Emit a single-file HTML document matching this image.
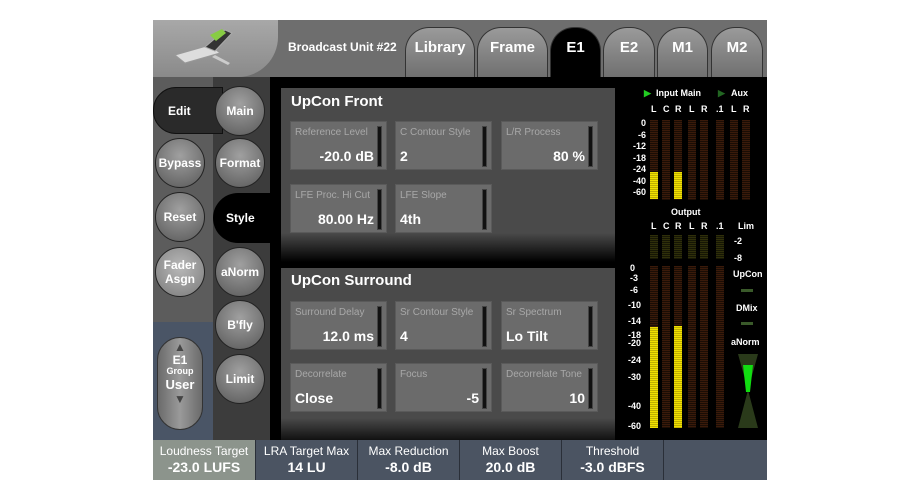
<!DOCTYPE html><html><head><style>
*{margin:0;padding:0;box-sizing:border-box}
body{width:920px;height:500px;background:#fff;font-family:"Liberation Sans",sans-serif;position:relative;overflow:hidden}
.a{position:absolute}
.b{font-weight:bold;color:#fff}
.tab{position:absolute;top:27px;height:52px;border-radius:24px 24px 0 0;background:linear-gradient(#9a9a9a,#6e6e6e);border:1px solid #333;border-bottom:none;color:#fff;font-weight:bold;font-size:15px;text-align:center;line-height:40px}
.circ{position:absolute;width:50px;height:50px;border-radius:50%;background:radial-gradient(circle at 50% 35%,#a0a0a0,#6a6a6a 75%,#4a4a4a);border:1px solid #222;color:#fff;font-weight:bold;font-size:12px;text-align:center;display:flex;align-items:center;justify-content:center;line-height:14px}
.panel{position:absolute;left:281px;width:334px;background:#4a4a4a}
.cell{position:absolute;width:97px;height:49px;background:#6b6b6b;border:1px solid #5a5a5a}
.cell .l{position:absolute;left:4px;top:5px;font-size:10px;color:#a8a8a8;white-space:nowrap}
.cell .v{position:absolute;top:26px;font-size:14px;font-weight:bold;color:#fff}
.sl{position:absolute;right:4px;top:4px;width:5px;height:41px;background:#111;border:1px solid #444}
.bot{position:absolute;top:440px;height:40px;background:#4b5462;color:#fff;text-align:center;font-size:12px;line-height:16px;padding-top:3px;border-right:1px solid #2a2f38}
.bot b{font-size:14px;display:block}
.m{position:absolute;color:#fff;font-weight:bold;font-size:9px}
.bar{position:absolute;width:8px;background:repeating-linear-gradient(#3a1a0a 0 1px,#1a0d05 1px 2px)}
.bar2{position:absolute;width:8px;background:repeating-linear-gradient(#2f2f0a 0 1px,#161605 1px 2px)}
.y{position:absolute;width:8px;background:repeating-linear-gradient(#f0e000 0 1px,#c0b000 1px 2px)}
</style></head><body>
<div class="a" style="left:153px;top:20px;width:614px;height:57px;background:#6e6e6e"></div>
<div class="a" style="left:153px;top:20px;width:125px;height:57px;background:linear-gradient(#a8a8a8,#8a8a8a);border-radius:0 0 40px 0"></div>
<svg class="a" style="left:170px;top:25px" width="80" height="45"><polygon points="5,30 40,20 50,28 15,38" fill="#ddd" stroke="#999"/><polygon points="35,22 55,5 62,8 45,26" fill="#333" stroke="#aaa"/><polygon points="40,10 52,4 56,8 46,16" fill="#8c4"/><polygon points="45,30 60,38 58,40 42,32" fill="#ccc"/></svg>
<div class="a b" style="left:288px;top:40px;font-size:12px">Broadcast Unit #22</div>
<div class="tab" style="left:405px;width:70px">Library</div>
<div class="tab" style="left:477px;width:71px">Frame</div>
<div class="tab" style="left:550px;width:51px;background:#000">E1</div>
<div class="tab" style="left:603px;width:52px">E2</div>
<div class="tab" style="left:657px;width:51px">M1</div>
<div class="tab" style="left:711px;width:52px">M2</div>
<div class="a" style="left:153px;top:77px;width:614px;height:363px;background:#000"></div>
<div class="a" style="left:153px;top:77px;width:60px;height:245px;background:#5c5c5c"></div>
<div class="a" style="left:153px;top:322px;width:60px;height:118px;background:#4a5566"></div>
<div class="a" style="left:213px;top:77px;width:57px;height:363px;background:#3c3c3c"></div>
<div class="a" style="left:153px;top:87px;width:70px;height:47px;background:#2a2a2a;border-radius:23px 0 0 23px;border:1px solid #111"></div>
<div class="a b" style="left:168px;top:104px;font-size:12px">Edit</div>
<div class="circ" style="left:215px;top:86px">Main</div>
<div class="circ" style="left:155px;top:138px">Bypass</div>
<div class="circ" style="left:215px;top:138px">Format</div>
<div class="circ" style="left:155px;top:192px">Reset</div>
<div class="a" style="left:213px;top:193px;width:57px;height:50px;background:#000;border-radius:25px 0 0 25px"></div>
<div class="a b" style="left:226px;top:211px;font-size:12px">Style</div>
<div class="circ" style="left:155px;top:247px;background:radial-gradient(circle at 50% 40%,#b8b8b8,#8a8a8a 75%,#666)">Fader<br>Asgn</div>
<div class="circ" style="left:215px;top:247px">aNorm</div>
<div class="circ" style="left:215px;top:300px">B'fly</div>
<div class="circ" style="left:215px;top:354px">Limit</div>
<div class="a" style="left:157px;top:337px;width:46px;height:93px;border-radius:23px;background:linear-gradient(90deg,#6a6a6a,#9a9a9a 50%,#6a6a6a);border:1px solid #333;color:#fff;font-weight:bold;text-align:center">
<div style="font-size:12px;color:#444;margin-top:2px">▲</div><div style="font-size:12px;line-height:12px">E1</div><div style="font-size:9px;line-height:11px">Group</div><div style="font-size:13px;line-height:15px">User</div><div style="font-size:12px;color:#444">▼</div></div>
<div class="panel" style="top:88px;height:174px;background:linear-gradient(#4a4a4a 0,#4a4a4a 145px,#000 174px)"></div>
<div class="a b" style="left:291px;top:93px;font-size:15px">UpCon Front</div>
<div class="cell" style="left:290px;top:121px"><span class="l">Reference Level</span><span class="v" style="right:12px">-20.0 dB</span><div class="sl"></div></div>
<div class="cell" style="left:395px;top:121px"><span class="l">C Contour Style</span><span class="v" style="left:4px">2</span><div class="sl"></div></div>
<div class="cell" style="left:501px;top:121px"><span class="l">L/R Process</span><span class="v" style="right:12px">80 %</span><div class="sl"></div></div>
<div class="cell" style="left:290px;top:184px"><span class="l">LFE Proc. Hi Cut</span><span class="v" style="right:12px">80.00 Hz</span><div class="sl"></div></div>
<div class="cell" style="left:395px;top:184px"><span class="l">LFE Slope</span><span class="v" style="left:4px">4th</span><div class="sl"></div></div>
<div class="panel" style="top:268px;height:172px;background:linear-gradient(#4a4a4a 0,#4a4a4a 150px,#111 172px)"></div>
<div class="a b" style="left:291px;top:272px;font-size:15px">UpCon Surround</div>
<div class="cell" style="left:290px;top:301px"><span class="l">Surround Delay</span><span class="v" style="right:12px">12.0 ms</span><div class="sl"></div></div>
<div class="cell" style="left:395px;top:301px"><span class="l">Sr Contour Style</span><span class="v" style="left:4px">4</span><div class="sl"></div></div>
<div class="cell" style="left:501px;top:301px"><span class="l">Sr Spectrum</span><span class="v" style="left:4px">Lo Tilt</span><div class="sl"></div></div>
<div class="cell" style="left:290px;top:363px"><span class="l">Decorrelate</span><span class="v" style="left:4px">Close</span><div class="sl"></div></div>
<div class="cell" style="left:395px;top:363px"><span class="l">Focus</span><span class="v" style="right:12px">-5</span><div class="sl"></div></div>
<div class="cell" style="left:501px;top:363px"><span class="l">Decorrelate Tone</span><span class="v" style="right:12px">10</span><div class="sl"></div></div>
<div class="m" style="left:644px;top:88px;color:#2c2">▶</div><div class="m" style="left:656px;top:88px">Input Main</div>
<div class="m" style="left:718px;top:88px;color:#262">▶</div><div class="m" style="left:731px;top:88px">Aux</div>
<div class="m" style="left:651px;top:104px">L</div><div class="m" style="left:663px;top:104px">C</div><div class="m" style="left:675px;top:104px">R</div><div class="m" style="left:689px;top:104px">L</div><div class="m" style="left:701px;top:104px">R</div><div class="m" style="left:716px;top:104px">.1</div><div class="m" style="left:731px;top:104px">L</div><div class="m" style="left:743px;top:104px">R</div>
<div class="m" style="left:630px;top:118px;line-height:11.5px;text-align:right;width:16px">0<br>-6<br>-12<br>-18<br>-24<br>-40<br>-60</div>
<div class="bar" style="left:650px;top:120px;height:80px"></div><div class="bar" style="left:662px;top:120px;height:80px"></div><div class="bar" style="left:674px;top:120px;height:80px"></div><div class="bar" style="left:688px;top:120px;height:80px"></div><div class="bar" style="left:700px;top:120px;height:80px"></div><div class="bar" style="left:716px;top:120px;height:80px"></div><div class="bar" style="left:730px;top:120px;height:80px"></div><div class="bar" style="left:742px;top:120px;height:80px"></div>
<div class="y" style="left:650px;top:172px;height:27px"></div><div class="y" style="left:674px;top:172px;height:27px"></div>
<div class="m" style="left:671px;top:207px">Output</div>
<div class="m" style="left:651px;top:221px">L</div><div class="m" style="left:663px;top:221px">C</div><div class="m" style="left:675px;top:221px">R</div><div class="m" style="left:689px;top:221px">L</div><div class="m" style="left:701px;top:221px">R</div><div class="m" style="left:716px;top:221px">.1</div><div class="m" style="left:738px;top:221px">Lim</div>
<div class="m" style="left:734px;top:236px">-2</div><div class="m" style="left:734px;top:253px">-8</div>
<div class="bar2" style="left:650px;top:235px;height:24px"></div><div class="bar2" style="left:662px;top:235px;height:24px"></div><div class="bar2" style="left:674px;top:235px;height:24px"></div><div class="bar2" style="left:688px;top:235px;height:24px"></div><div class="bar2" style="left:700px;top:235px;height:24px"></div><div class="bar2" style="left:716px;top:235px;height:24px"></div>
<div class="m" style="left:630px;top:263px">0</div><div class="m" style="left:630px;top:273px">-3</div><div class="m" style="left:630px;top:285px">-6</div><div class="m" style="left:628px;top:300px">-10</div><div class="m" style="left:628px;top:316px">-14</div><div class="m" style="left:628px;top:331px;line-height:8px">-18<br>-20</div><div class="m" style="left:628px;top:355px">-24</div><div class="m" style="left:628px;top:372px">-30</div><div class="m" style="left:628px;top:401px">-40</div><div class="m" style="left:628px;top:421px">-60</div>
<div class="bar" style="left:650px;top:266px;height:162px"></div><div class="bar" style="left:662px;top:266px;height:162px"></div><div class="bar" style="left:674px;top:266px;height:162px"></div><div class="bar" style="left:688px;top:266px;height:162px"></div><div class="bar" style="left:700px;top:266px;height:162px"></div><div class="bar" style="left:716px;top:266px;height:162px"></div>
<div class="y" style="left:650px;top:327px;height:101px"></div><div class="y" style="left:674px;top:326px;height:102px"></div>
<div class="m" style="left:733px;top:269px">UpCon</div><div class="a" style="left:741px;top:289px;width:12px;height:3px;background:#3a5a2a"></div>
<div class="m" style="left:736px;top:303px">DMix</div><div class="a" style="left:741px;top:322px;width:12px;height:3px;background:#3a5a2a"></div>
<div class="m" style="left:731px;top:337px">aNorm</div>
<svg class="a" style="left:735px;top:352px" width="26" height="78"><polygon points="3,2 23,2 13,38 3,76 23,76 13,38" fill="#2a3a1a"/><polygon points="8,13 18,13 15,40 11,40" fill="#1d1"/></svg>
<div class="bot" style="left:153px;width:103px;background:#8c948c">Loudness Target<b>-23.0 LUFS</b></div>
<div class="bot" style="left:256px;width:102px">LRA Target Max<b>14 LU</b></div>
<div class="bot" style="left:358px;width:102px">Max Reduction<b>-8.0 dB</b></div>
<div class="bot" style="left:460px;width:102px">Max Boost<b>20.0 dB</b></div>
<div class="bot" style="left:562px;width:102px">Threshold<b>-3.0 dBFS</b></div>
<div class="bot" style="left:664px;width:103px;border-right:none"></div>
</body></html>
